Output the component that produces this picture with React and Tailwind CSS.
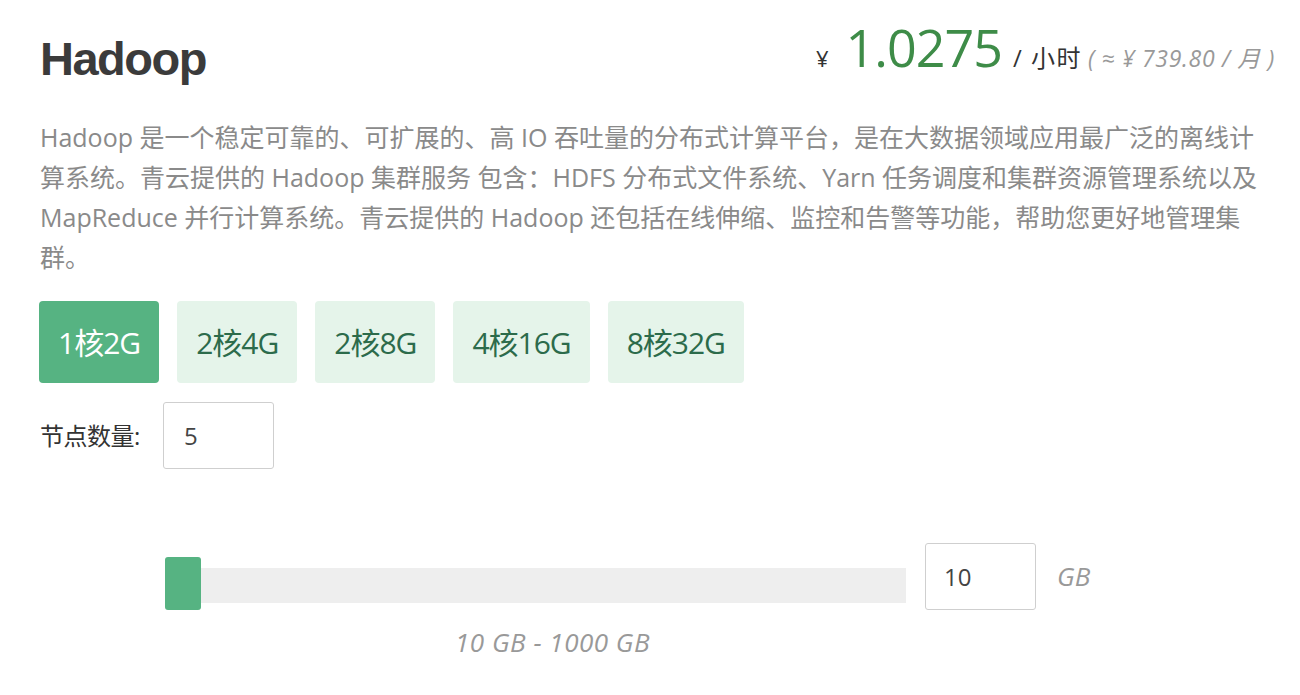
import { useState } from 'react'

const SPECS = ['1核2G', '2核4G', '2核8G', '4核16G', '8核32G']
const BODY_FONT = "font-['Open_Sans','Noto_Sans_CJK_SC',sans-serif]"

function SpecButton({ label, active, onClick }) {
  return (
    <button
      onClick={onClick}
      className={
        active
          ? 'h-[82px] px-[19px] rounded-[4px] bg-[#56b382] text-white text-[30px] tracking-[-1px]'
          : 'h-[82px] px-[19px] rounded-[4px] bg-[#e5f4ea] text-[#2c6b4b] text-[30px] tracking-[-1px]'
      }
    >
      {label}
    </button>
  )
}

export default function App() {
  const [spec, setSpec] = useState(0)
  const [nodes, setNodes] = useState('5')
  const [disk, setDisk] = useState('10')

  return (
    <div className={`${BODY_FONT} w-[1300px] h-[695px] bg-white pl-[39px] pr-[25px] pt-[18px] text-[#333]`}>
      {/* Header: name and hourly price */}
      <div className="flex items-start justify-between">
        <h1 className="ml-[1px] mt-[13px] font-['Liberation_Sans',sans-serif] font-bold text-[47px] leading-[56px] tracking-[-1.5px] text-[#3b3b3b]">
          Hadoop
        </h1>
        <div className="mt-[1px] flex items-baseline leading-[56px]">
          <span className="text-[22px] text-[#333] mr-[17px]">¥</span>
          <span className="text-[52px] tracking-[-1px] text-[#3e8c48]">1.0275</span>
          <span className="text-[24px] text-[#333] ml-[11px] tracking-[1.5px]">/ 小时</span>
          <span className="text-[23px] italic text-[#999] ml-[6px] tracking-[0.7px]">( ≈ ¥ 739.80 / 月 )</span>
        </div>
      </div>

      {/* Description */}
      <p className="ml-[1px] mt-[30px] w-[1240px] text-[25px] leading-[40px] text-[#8a8a8a] whitespace-nowrap">
        Hadoop 是一个稳定可靠的、可扩展的、高 IO 吞吐量的分布式计算平台，是在大数据领域应用最广泛的离线计
        <br />
        算系统。青云提供的 Hadoop 集群服务 包含：HDFS 分布式文件系统、Yarn 任务调度和集群资源管理系统以及
        <br />
        MapReduce 并行计算系统。青云提供的 Hadoop 还包括在线伸缩、监控和告警等功能，帮助您更好地管理集
        <br />
        群。
      </p>

      {/* Instance spec */}
      <div className="mt-[24px] flex gap-[18px]">
        {SPECS.map((s, i) => (
          <SpecButton key={s} label={s} active={spec === i} onClick={() => setSpec(i)} />
        ))}
      </div>

      {/* Node count */}
      <div className="ml-[1px] mt-[19px] flex items-center">
        <span className="w-[123px] text-[24px] text-[#333] tracking-[-0.5px]">节点数量:</span>
        <input
          value={nodes}
          onChange={(e) => setNodes(e.target.value)}
          className="w-[111px] h-[67px] border border-[#cfcfcf] rounded-[3px] px-[20px] text-[24px] text-[#444] outline-none"
        />
      </div>

      {/* Disk size slider */}
      <div className="mt-[74px] ml-[126px] flex items-start">
        <div className="relative w-[741px] h-[53px] mt-[14px]">
          <div className="mt-[11px] h-[35px] bg-[#eeeeee]" />
          <div className="absolute left-0 top-0 w-[36px] h-[53px] rounded-[3px] bg-[#56b382]" />
        </div>
        <input
          value={disk}
          onChange={(e) => setDisk(e.target.value)}
          className="ml-[19px] w-[111px] h-[67px] border border-[#cfcfcf] rounded-[3px] px-[18px] text-[24px] text-[#444] outline-none"
        />
        <span className="ml-[21px] self-center text-[26px] italic text-[#999]">GB</span>
      </div>
      <div className="ml-[416px] mt-[14px] text-[26px] leading-[36px] italic text-[#999] tracking-[0.5px]">
        10 GB - 1000 GB
      </div>
    </div>
  )
}
